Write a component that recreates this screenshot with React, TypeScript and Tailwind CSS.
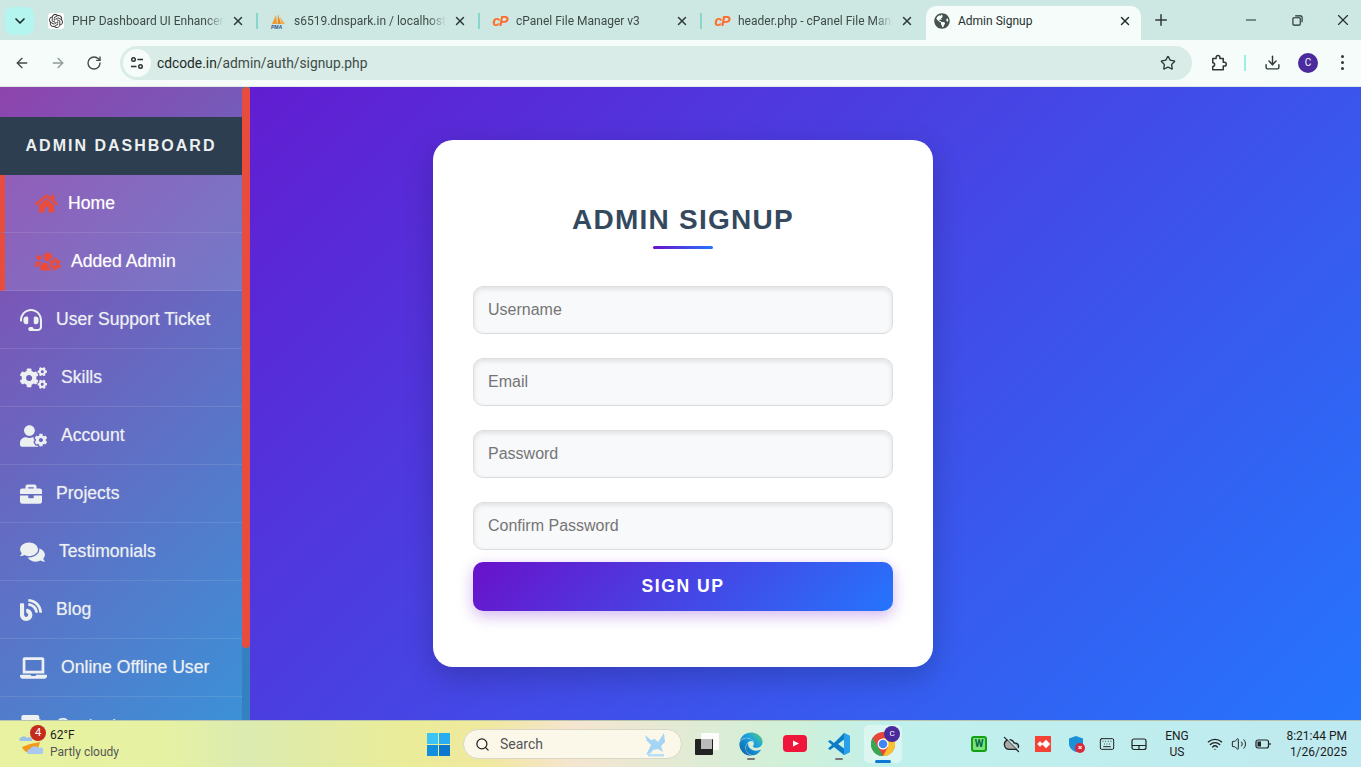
import { ArrowLeft, ArrowRight, RotateCw, Star, Download, Plus, X, Minus, Search, Wifi, Volume2, Keyboard, CloudOff, ChevronDown } from 'lucide-react';
import { FaHome, FaUsersCog, FaHeadset, FaCogs, FaUserCog, FaBriefcase, FaComments, FaBlog, FaLaptop, FaAddressBook, FaGlobeAmericas, FaEdge } from 'react-icons/fa';
import { SiOpenai } from 'react-icons/si';

const tabs = [
  { title: 'PHP Dashboard UI Enhancement', icon: 'gpt' },
  { title: 's6519.dnspark.in / localhost', icon: 'pma' },
  { title: 'cPanel File Manager v3', icon: 'cp' },
  { title: 'header.php - cPanel File Manager', icon: 'cp' },
];

const menu = [
  { label: 'Home', Icon: FaHome, size: 'w-[23px] h-[21px]', active: true },
  { label: 'Added Admin', Icon: FaUsersCog, size: 'w-[26px] h-[21px]', active: true },
  { label: 'User Support Ticket', Icon: FaHeadset, size: 'w-[22px] h-[22px]' },
  { label: 'Skills', Icon: FaCogs, size: 'w-[27px] h-[22px]' },
  { label: 'Account', Icon: FaUserCog, size: 'w-[27px] h-[22px]' },
  { label: 'Projects', Icon: FaBriefcase, size: 'w-[22px] h-[22px]' },
  { label: 'Testimonials', Icon: FaComments, size: 'w-[25px] h-[22px]' },
  { label: 'Blog', Icon: FaBlog, size: 'w-[22px] h-[22px]' },
  { label: 'Online Offline User', Icon: FaLaptop, size: 'w-[27px] h-[22px]' },
  { label: 'Contact', Icon: FaAddressBook, size: 'w-[22px] h-[22px]' },
];

const fields = ['Username', 'Email', 'Password', 'Confirm Password'];

function PmaIcon() {
  return (
    <svg viewBox="0 0 16 16" className="w-4 h-4 flex-shrink-0">
      <path d="M2 11 L6 2 L7 11 Z" fill="#f09a2a" />
      <path d="M7.5 11 L8 1 L11 11 Z" fill="#e8862a" />
      <path d="M11 11 L10 4 L15 11 Z" fill="#f4b04a" />
      <text x="1" y="15.5" fontSize="5" fontWeight="700" fontStyle="italic" fill="#2c4c8c" fontFamily="Liberation Sans">PMA</text>
    </svg>
  );
}

function TabIcon({ kind }: { kind: string }) {
  if (kind === 'gpt') {
    return (
      <span className="w-4 h-4 flex-shrink-0 rounded-[3px] bg-white flex items-center justify-center">
        <SiOpenai className="w-[14px] h-[14px] text-[#333]" />
      </span>
    );
  }
  if (kind === 'pma') return <PmaIcon />;
  return (
    <span className="w-4 h-4 flex-shrink-0 flex items-center justify-center font-['Liberation_Sans',sans-serif] text-[14px] leading-none font-bold italic tracking-[-1px] text-[#ff6c2c]">cP</span>
  );
}

function BrowserTabs() {
  return (
    <div className="h-10 bg-[#cde8e2] flex items-center flex-shrink-0 pl-[5px] text-[12px] text-[#3f4a47]">
      <div className="w-[29px] h-[28px] mt-[1px] rounded-lg bg-[#b5f5ef] flex items-center justify-center flex-shrink-0">
        <ChevronDown className="w-4 h-4 text-[#1f2a28]" strokeWidth={2.5} />
      </div>
      <div className="w-[2px] flex-shrink-0" />
      {tabs.map((t, i) => (
        <div key={t.title} className="w-[222px] h-full flex items-center flex-shrink-0 pl-[12px] pt-[1px]">
          <TabIcon kind={t.icon} />
          <span className="ml-2 w-[155px] pt-[1px] whitespace-nowrap overflow-hidden [mask-image:linear-gradient(to_right,black_88%,transparent)]">{t.title}</span>
          <X className="w-[14px] h-[14px] ml-[7px] text-[#2f3a38] flex-shrink-0" strokeWidth={2.5} />
          {i < 3 && <span className="ml-[11px] w-[2px] h-4 bg-[#86d8cc] flex-shrink-0" />}
        </div>
      ))}
      <div className="ml-[2px] w-[215px] h-[34px] mt-[6px] pb-[5px] bg-[#f5fcfa] rounded-t-[10px] flex items-center pl-2 pr-[9px] flex-shrink-0">
        <FaGlobeAmericas className="w-4 h-4 text-[#46524f] flex-shrink-0" />
        <span className="ml-2 flex-1 pt-[1px] text-[#27302e]">Admin Signup</span>
        <X className="w-[14px] h-[14px] text-[#1f2a28]" strokeWidth={2.5} />
      </div>
      <Plus className="ml-[11px] w-[18px] h-[18px] text-[#2f3a38]" strokeWidth={2} />
      <Minus className="ml-[73px] w-4 h-4 text-[#1f2a28]" strokeWidth={1.5} />
      <svg viewBox="0 0 12 12" className="ml-[33px] w-[11px] h-[11px] text-[#1f2a28]" fill="none" stroke="currentColor" strokeWidth="1.2">
        <rect x="1" y="3" width="8" height="8" rx="1" />
        <path d="M3.5 1h6a1.5 1.5 0 0 1 1.5 1.5V8" />
      </svg>
      <X className="ml-[31px] w-[18px] h-[18px] text-[#1f2a28]" strokeWidth={1.5} />
    </div>
  );
}

function Toolbar() {
  return (
    <div className="h-[47px] bg-[#f5fcfa] flex items-center flex-shrink-0 border-b border-[#dfe8e5] pb-[1px] text-[#3f4a47]">
      <ArrowLeft className="ml-[14px] w-4 h-4" strokeWidth={2} />
      <ArrowRight className="ml-[20px] w-4 h-4 text-[#8f9a97]" strokeWidth={2} />
      <RotateCw className="ml-[20px] w-4 h-4" strokeWidth={2} />
      <div className="ml-[18px] w-[1072px] h-[34px] rounded-full bg-[#d9ece7] flex items-center pl-[3px] pr-4">
        <span className="w-7 h-7 rounded-full bg-[#f5fcfa] flex items-center justify-center flex-shrink-0">
          <svg viewBox="0 0 16 16" className="w-4 h-4" fill="none" stroke="#27302e" strokeWidth="1.4">
            <circle cx="4.5" cy="4.5" r="1.8" />
            <path d="M8.5 4.5H14M2 11.5h5.5" />
            <circle cx="11.5" cy="11.5" r="1.8" />
          </svg>
        </span>
        <span className="ml-[6px] flex-1 pt-[2px] text-[13.8px] text-[#1f2a28]">cdcode.in<span className="text-[#3f4a47]">/admin/auth/signup.php</span></span>
        <Star className="w-4 h-4 text-[#2f3a38]" strokeWidth={2} />
      </div>
      <svg viewBox="0 0 24 24" className="ml-[17px] w-[18px] h-[18px]" fill="none" stroke="#2f3a38" strokeWidth="2" strokeLinejoin="round">
        <path d="M5 6h4.5V4.5a2.5 2.5 0 0 1 5 0V6H19v5h1.5a2.5 2.5 0 0 1 0 5H19v5H5v-4.5a2.5 2.5 0 0 0 0-5V6Z" />
      </svg>
      <span className="ml-[17px] w-[2px] h-4 bg-[#9eeee4]" />
      <Download className="ml-[18px] w-[17px] h-[17px] text-[#2f3a38]" strokeWidth={2} />
      <span className="ml-[17px] w-5 h-5 rounded-full bg-[#4a2a9c] text-white text-[10px] flex items-center justify-center">C</span>
      <span className="ml-[23px] flex flex-col gap-[3px]">
        <span className="w-[3px] h-[3px] rounded-full bg-[#2f3a38]" />
        <span className="w-[3px] h-[3px] rounded-full bg-[#2f3a38]" />
        <span className="w-[3px] h-[3px] rounded-full bg-[#2f3a38]" />
      </span>
    </div>
  );
}

function Sidebar() {
  return (
    <aside className="w-[250px] h-full flex flex-shrink-0 overflow-hidden">
      <div className="w-[242px] h-full overflow-hidden">
        <div className="h-[714px] pt-[30px] bg-[linear-gradient(135deg,#8e44ad,#3498db)]">
          <div className="h-[58px] bg-[#2c3e50] flex items-center justify-center text-[#ecf0f1] text-[16px] font-bold tracking-[2px]">
            ADMIN DASHBOARD
          </div>
          {menu.map(({ label, Icon, size, active }) => (
            <div
              key={label}
              className={`h-[58px] flex items-center border-b border-white/10 text-[17.6px] [text-shadow:0_0_1px_rgba(255,255,255,0.5)] ${active ? 'bg-white/10 border-l-[5px] border-l-[#e74c3c] pl-[30px] gap-[10px] text-white' : 'pl-5 gap-[14px] text-[#ecf0f1]'}`}
            >
              <Icon className={`${size} flex-shrink-0 ${active ? 'text-[#e74c3c]' : ''}`} />
              <span>{label}</span>
            </div>
          ))}
        </div>
      </div>
      <div className="w-2 h-full bg-[#3480c0]">
        <div className="h-[561px] rounded-[4px] bg-[#e74c3c]" />
      </div>
    </aside>
  );
}

function SignupCard() {
  return (
    <div className="ml-[183px] mt-[53px] w-[500px] h-[527px] bg-white rounded-[20px] p-10 shadow-[0_10px_30px_rgba(0,0,0,0.2)] flex-shrink-0">
      <h1 className="mt-[22px] text-center text-[28px] leading-[36px] font-bold tracking-[1.25px] text-[#34495e]">ADMIN SIGNUP</h1>
      <div className="mx-auto mt-[8px] w-[60px] h-[3px] rounded-sm bg-[linear-gradient(to_right,#6a11cb,#2575fc)]" />
      <form className="mt-[37px]">
        {fields.map(f => (
          <input
            key={f}
            placeholder={f}
            className="block w-full h-[48px] mb-6 last-of-type:mb-3 px-[14px] rounded-[10px] border border-[#ddd] bg-[#f8f9fa] text-[16px] placeholder-[#757575] shadow-[inset_0_2px_5px_rgba(0,0,0,0.1)] outline-none"
          />
        ))}
        <button type="button" className="w-full h-[49px] rounded-[10px] bg-[linear-gradient(135deg,#6a11cb,#2575fc)] text-white text-[17.6px] font-bold tracking-[1.5px] shadow-[0_5px_15px_rgba(106,17,203,0.3)]">
          SIGN UP
        </button>
      </form>
    </div>
  );
}

function WeatherIcon() {
  return (
    <svg viewBox="0 0 24 24" className="w-6 h-6 flex-shrink-0">
      <path d="M1 9 a4 3 0 0 1 7-3 a3 3 0 0 1 5 3 Z" fill="#9cc0ea" />
      <path d="M3 15 a9 9 0 0 0 16 2 l2-7 -10 2 Z" fill="#f29a1e" />
      <path d="M9 22 a3 3 0 0 1 2-5 a5 4 0 0 1 9-1 a3 3 0 0 1 3 6 Z" fill="#a8c8f0" />
    </svg>
  );
}

function ChromeIcon() {
  return (
    <svg viewBox="0 0 24 24" className="w-6 h-6">
      <circle cx="12" cy="12" r="12" fill="#e8453c" />
      <path d="M12 24 A12 12 0 0 1 1.6 6 L7 15 Z" fill="#34a853" />
      <path d="M12 24 A12 12 0 0 0 22.4 6 H12 L17 15 Z" fill="#fbc02d" />
      <circle cx="12" cy="12" r="5.5" fill="#fff" />
      <circle cx="12" cy="12" r="4.3" fill="#4285f4" />
    </svg>
  );
}

function Taskbar() {
  return (
    <footer className="h-[47px] flex-shrink-0 flex items-center border-t border-[#b8c4ae] font-['Roboto',sans-serif] text-[12px] text-[#1c1c1c] bg-[linear-gradient(to_right,#e8f2a0,#e6f2a2_12%,#dcebb0_18%,#eaec98_30%,#f0e8a0_36%,#f5e5d0_42%,#d0f0d8_58%,#c0f0ec_66%,#bfeaf0)]">
      <div className="relative ml-[19px] flex items-center">
        <WeatherIcon />
        <span className="absolute left-[11px] -top-[7px] w-4 h-4 rounded-full bg-[#c42b1c] text-white text-[11px] leading-4 text-center">4</span>
      </div>
      <div className="ml-[7px] leading-[17px] w-[100px] -mt-[1px]">
        <div>62°F</div>
        <div className="text-[#555]">Partly cloudy</div>
      </div>
      <div className="ml-[277px] w-[23px] h-[23px] grid grid-cols-2 gap-[1px]">
        <span className="bg-[#3cc4f4]" />
        <span className="bg-[#28aef0]" />
        <span className="bg-[#0f8fdc]" />
        <span className="bg-[#0a78cc]" />
      </div>
      <div className="ml-[13px] w-[219px] h-[30px] rounded-full bg-[#fbf8ea] border border-[#d8d8c8] flex items-center pl-[11px] pr-[13px]">
        <Search className="w-[15px] h-[15px] text-[#222]" strokeWidth={2} />
        <span className="ml-[10px] flex-1 text-[14px] text-[#555]">Search</span>
        <svg viewBox="0 0 26 26" className="w-[26px] h-[26px]">
          <path d="M3 4 l6 5 l4-1 l3 3 l6-9 l1 9 l-4 4 l2 6 l-5-3 l-5 1 l-2 3 l-5 2 l3-6 l2-4 l-4-4 Z" fill="#a6d4f4" />
          <path d="M6 23 h16 v2.5 h-16 Z" fill="#b8e0f4" />
        </svg>
      </div>
      <div className="relative ml-[13px] w-6 h-[22px]">
        <span className="absolute right-0 top-0 w-[18px] h-[17px] bg-white/90 rounded-[1px]" />
        <span className="absolute left-0 bottom-0 w-[18px] h-[16px] bg-[#222] rounded-[1px]" />
        <span className="absolute left-[6px] top-[6px] w-[11px] h-[10px] bg-[#bbb]" />
      </div>
      <div className="relative ml-[20px] w-6 h-6">
        <svg viewBox="0 0 24 24" className="w-0 h-0 absolute">
          <defs>
            <linearGradient id="edge" x1="0" y1="1" x2="1" y2="0">
              <stop offset="0" stopColor="#0c59a4" />
              <stop offset="0.6" stopColor="#1ba1e2" />
              <stop offset="1" stopColor="#5ed16a" />
            </linearGradient>
          </defs>
        </svg>
        <FaEdge className="w-6 h-6" fill="url(#edge)" stroke="none" />
        <span className="absolute left-[8px] -bottom-[4px] w-2 h-[2px] rounded-full bg-[#777]" />
      </div>
      <svg viewBox="0 0 24 18" className="ml-[20px] w-6 h-[18px]">
        <rect width="24" height="17" rx="4" fill="#f0153a" />
        <path d="M10 5.5 L16 8.5 L10 11.5 Z" fill="#fff" />
      </svg>
      <div className="relative ml-[20px] w-6 h-6">
        <svg viewBox="0 0 24 24" className="w-6 h-6">
          <path fillRule="evenodd" d="M17 1 L7 11 L3 8 L1 9.5 L5 13 L1 16.5 L3 18 L7 15 L17 23 L23 20 V4 Z M17 7.5 V16.5 L11 12 Z" fill="#0a7cc8" />
          <path d="M17 1 L23 4 V20 L17 23 Z" fill="#2aa0ec" />
        </svg>
        <span className="absolute left-[8px] -bottom-[4px] w-2 h-[2px] rounded-full bg-[#777]" />
      </div>
      <div className="relative ml-[13px] w-[38px] h-[38px] rounded-[5px] bg-white/40 flex items-center justify-center">
        <ChromeIcon />
        <span className="absolute left-[20px] top-[1px] w-4 h-4 rounded-full bg-[#4a2a9c] text-white text-[8px] leading-4 text-center">C</span>
        <span className="absolute left-[11px] bottom-0 w-4 h-[3px] rounded-full bg-[#0a78d4]" />
      </div>
      <div className="ml-[69px] w-4 h-4 rounded-[3px] border-2 border-[#12a012] bg-[#7ce07c] flex items-center justify-center text-[10px] font-bold leading-none text-[#064]">W</div>
      <CloudOff className="ml-4 w-[17px] h-[17px] text-[#222]" fill="#aaa" strokeWidth={1.8} />
      <div className="ml-[15px] w-4 h-4 bg-[#f44336] flex items-center justify-center gap-[1px]">
        <span className="w-1 h-1 rotate-45 bg-white" />
        <span className="w-[6px] h-[6px] rotate-45 bg-white" />
      </div>
      <div className="relative ml-[17px] w-4 h-4">
        <svg viewBox="0 0 16 16" className="w-4 h-4">
          <path d="M8 0 L15 2.5 V8 C15 12 11 15 8 16 C5 15 1 12 1 8 V2.5 Z" fill="#1b8fd8" />
        </svg>
        <span className="absolute left-[7px] top-[7px] w-[10px] h-[10px] rounded-full bg-[#d9283a] text-white text-[8px] leading-[10px] text-center font-bold">×</span>
      </div>
      <Keyboard className="ml-[15px] w-4 h-4 text-[#222]" strokeWidth={1.5} />
      <svg viewBox="0 0 16 16" className="ml-4 w-4 h-4" fill="none" stroke="#222" strokeWidth="1.2">
        <rect x="1" y="3" width="14" height="10.5" rx="2" />
        <path d="M1 9.5h14M8 9.5v4" />
      </svg>
      <div className="ml-[14px] w-[32px] text-center leading-[16px] -mt-[1px]">
        <div>ENG</div>
        <div>US</div>
      </div>
      <Wifi className="ml-[14px] w-4 h-4 text-[#222]" strokeWidth={2} />
      <Volume2 className="ml-2 w-4 h-4 text-[#222]" strokeWidth={1.5} />
      <svg viewBox="0 0 16 16" className="ml-2 w-4 h-4" fill="none" stroke="#222" strokeWidth="1.2">
        <rect x="1" y="4" width="12.5" height="8" rx="2" />
        <rect x="2.5" y="5.5" width="3.5" height="5" fill="#222" stroke="none" />
        <path d="M15 7v2" />
      </svg>
      <div className="ml-[14px] w-[62px] text-right leading-[16px] whitespace-nowrap">
        <div>8:21:44 PM</div>
        <div>1/26/2025</div>
      </div>
    </footer>
  );
}

export default function App() {
  return (
    <div className="w-[1361px] h-[767px] overflow-hidden flex flex-col font-['Liberation_Sans',Arial,sans-serif]">
      <div className="font-['Roboto',sans-serif]">
        <BrowserTabs />
        <Toolbar />
      </div>
      <div className="flex-1 min-h-0 flex overflow-hidden bg-[linear-gradient(135deg,#6a11cb,#2575fc)]">
        <Sidebar />
        <SignupCard />
      </div>
      <Taskbar />
    </div>
  );
}
